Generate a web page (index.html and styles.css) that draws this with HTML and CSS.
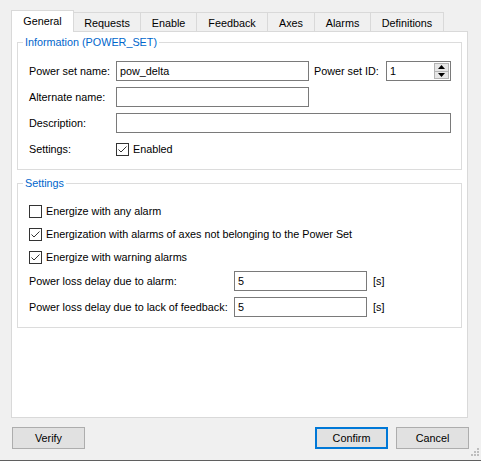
FILE: index.html
```html
<!DOCTYPE html>
<html>
<head>
<meta charset="utf-8">
<link rel="stylesheet" href="styles.css">
</head>
<body>
<div class="dialog">
  <div class="tabs">
    <div class="tab active w-general">General</div>
    <div class="tab w-requests">Requests</div>
    <div class="tab w-enable">Enable</div>
    <div class="tab w-feedback">Feedback</div>
    <div class="tab w-axes">Axes</div>
    <div class="tab w-alarms">Alarms</div>
    <div class="tab w-definitions">Definitions</div>
  </div>
  <div class="panel">
    <fieldset class="group group-info">
      <legend>Information (POWER_SET)</legend>
      <div class="row">
        <span class="label">Power set name:</span>
        <span class="input w-name">pow_delta</span>
        <span class="label-id">Power set ID:</span>
        <span class="input w-id">1
          <span class="spinner">
            <span class="spin-btn"><svg width="7" height="4" viewBox="0 0 7 4"><path d="M0 4 L3.5 0 L7 4 Z" fill="#000"/></svg></span>
            <span class="spin-btn"><svg width="7" height="4" viewBox="0 0 7 4"><path d="M0 0 L3.5 4 L7 0 Z" fill="#000"/></svg></span>
          </span>
        </span>
      </div>
      <div class="row">
        <span class="label">Alternate name:</span>
        <span class="input w-name"></span>
      </div>
      <div class="row">
        <span class="label">Description:</span>
        <span class="input w-desc"></span>
      </div>
      <div class="row">
        <span class="label">Settings:</span>
        <span class="check on"><svg width="13" height="13" viewBox="0 0 13 13"><rect x="0.5" y="0.5" width="12" height="12" fill="#fff" stroke="#333"/><path d="M2.5 6.5 L5 9 L10.5 3.5" fill="none" stroke="#333" stroke-width="1"/></svg></span>
        <span class="check-text">Enabled</span>
      </div>
    </fieldset>

    <fieldset class="group group-settings">
      <legend>Settings</legend>
      <div class="crow">
        <span class="check"><svg width="13" height="13" viewBox="0 0 13 13"><rect x="0.5" y="0.5" width="12" height="12" fill="#fff" stroke="#333"/></svg></span>
        <span class="check-text">Energize with any alarm</span>
      </div>
      <div class="crow">
        <span class="check"><svg width="13" height="13" viewBox="0 0 13 13"><rect x="0.5" y="0.5" width="12" height="12" fill="#fff" stroke="#333"/><path d="M2.5 6.5 L5 9 L10.5 3.5" fill="none" stroke="#333" stroke-width="1"/></svg></span>
        <span class="check-text">Energization with alarms of axes not belonging to the Power Set</span>
      </div>
      <div class="crow last">
        <span class="check"><svg width="13" height="13" viewBox="0 0 13 13"><rect x="0.5" y="0.5" width="12" height="12" fill="#fff" stroke="#333"/><path d="M2.5 6.5 L5 9 L10.5 3.5" fill="none" stroke="#333" stroke-width="1"/></svg></span>
        <span class="check-text">Energize with warning alarms</span>
      </div>
      <div class="row">
        <span class="label wide">Power loss delay due to alarm:</span>
        <span class="input w-delay">5</span>
        <span class="unit">[s]</span>
      </div>
      <div class="row">
        <span class="label wide">Power loss delay due to lack of feedback:</span>
        <span class="input w-delay">5</span>
        <span class="unit">[s]</span>
      </div>
    </fieldset>
  </div>
  <div class="footer">
    <button class="btn">Verify</button>
    <span class="spacer"></span>
    <button class="btn default">Confirm</button>
    <button class="btn">Cancel</button>
  </div>
  <svg class="grip" width="11" height="11" viewBox="0 0 11 11">
    <rect x="8" y="0" width="2" height="2" fill="#bdbdbd"/>
    <rect x="5" y="3" width="2" height="2" fill="#bdbdbd"/>
    <rect x="8" y="3" width="2" height="2" fill="#bdbdbd"/>
    <rect x="2" y="6" width="2" height="2" fill="#bdbdbd"/>
    <rect x="5" y="6" width="2" height="2" fill="#bdbdbd"/>
    <rect x="8" y="6" width="2" height="2" fill="#bdbdbd"/>
  </svg>
</div>
</body>
</html>
```

FILE: styles.css
```css
* { box-sizing: border-box; }
html, body { margin: 0; padding: 0; }
body {
  background: #f0f0f0;
  font-family: "Liberation Sans", Arial, sans-serif;
  font-size: 10.8px;
  color: #000;
}
.dialog {
  position: relative;
  width: 481px;
  height: 461px;
  padding-top: 10px;
  border-bottom: 1px solid #5f5f5f;
}
.tabs {
  display: flex;
  align-items: flex-start;
  height: 22px;
  margin-left: 11px;
  margin-bottom: -1px;
  position: relative;
  z-index: 1;
}
.tab {
  height: 19px;
  margin-top: 2px;
  margin-left: -1px;
  border: 1px solid #d9d9d9;
  border-bottom: none;
  background: #f0f0f0;
  display: flex;
  align-items: center;
  justify-content: center;
  padding-top: 1px;
}
.tab:first-child { margin-left: 0; }
.tab.active {
  height: 22px;
  margin-top: 0;
  background: #fff;
  position: relative;
  z-index: 2;
  padding-top: 0;
  padding-bottom: 1px;
}
.w-general { width: 63px; }
.w-requests { width: 68px; }
.w-enable { width: 57px; }
.w-feedback { width: 72px; }
.w-axes { width: 48px; }
.w-alarms { width: 57px; }
.w-definitions { width: 74px; }

.panel {
  margin-left: 11px;
  width: 457px;
  height: 387px;
  border: 1px solid #d9d9d9;
  background: #fff;
  padding: 0 5px;
}
.group {
  margin: 4px 0 0 0;
  padding: 12px 11px 10px 11px;
  border: 1px solid #dcdcdc;
  min-width: 0;
}
.group legend {
  margin-left: -6px;
  padding: 0 2px;
  line-height: 13px;
  height: 13px;
  color: #0066cc;
}
.group-settings {
  margin-top: 7px;
  padding-top: 11px;
}
.row {
  display: flex;
  align-items: center;
  height: 20px;
  margin-bottom: 6px;
}
.row:last-child { margin-bottom: 0; }
.crow {
  display: flex;
  align-items: center;
  height: 20px;
  margin-bottom: 3px;
}
.crow.last { margin-bottom: 4px; }
.label { width: 87px; flex: none; }
.label.wide { width: 205px; }
.label-id { margin-left: 5px; width: 72px; flex: none; }
.input {
  position: relative;
  flex: none;
  height: 20px;
  border: 1px solid #7a7a7a;
  background: #fff;
  padding-left: 3px;
  line-height: 18px;
}
.w-name { width: 193px; }
.w-id { width: 65px; }
.w-desc { width: 335px; }
.w-delay { width: 133px; }
.unit { margin-left: 6px; }
.spinner {
  position: absolute;
  right: 1px;
  top: 1px;
  width: 15px;
  height: 16px;
  display: flex;
  flex-direction: column;
}
.spin-btn {
  flex: 1;
  background: #e6e6e6;
  border: 1px solid #b4b4b4;
  display: flex;
  align-items: center;
  justify-content: center;
}
.spin-btn + .spin-btn { border-top: none; }
.spin-btn svg { display: block; }
.check { display: flex; flex: none; width: 13px; height: 13px; }
.check svg { display: block; }
.check-text { margin-left: 4px; }

.footer {
  display: flex;
  align-items: flex-start;
  margin-top: 9px;
  padding: 0 12px 0 12px;
}
.spacer { flex: 1; }
.btn {
  width: 73px;
  height: 22px;
  background: #e1e1e1;
  border: 1px solid #adadad;
  font-family: inherit;
  font-size: 10.8px;
  color: #000;
  padding: 0;
  margin: 0;
}
.btn.default {
  border: 2px solid #0078d7;
  margin-right: 8px;
}
.grip {
  position: absolute;
  right: 1px;
  bottom: 1px;
}
```
